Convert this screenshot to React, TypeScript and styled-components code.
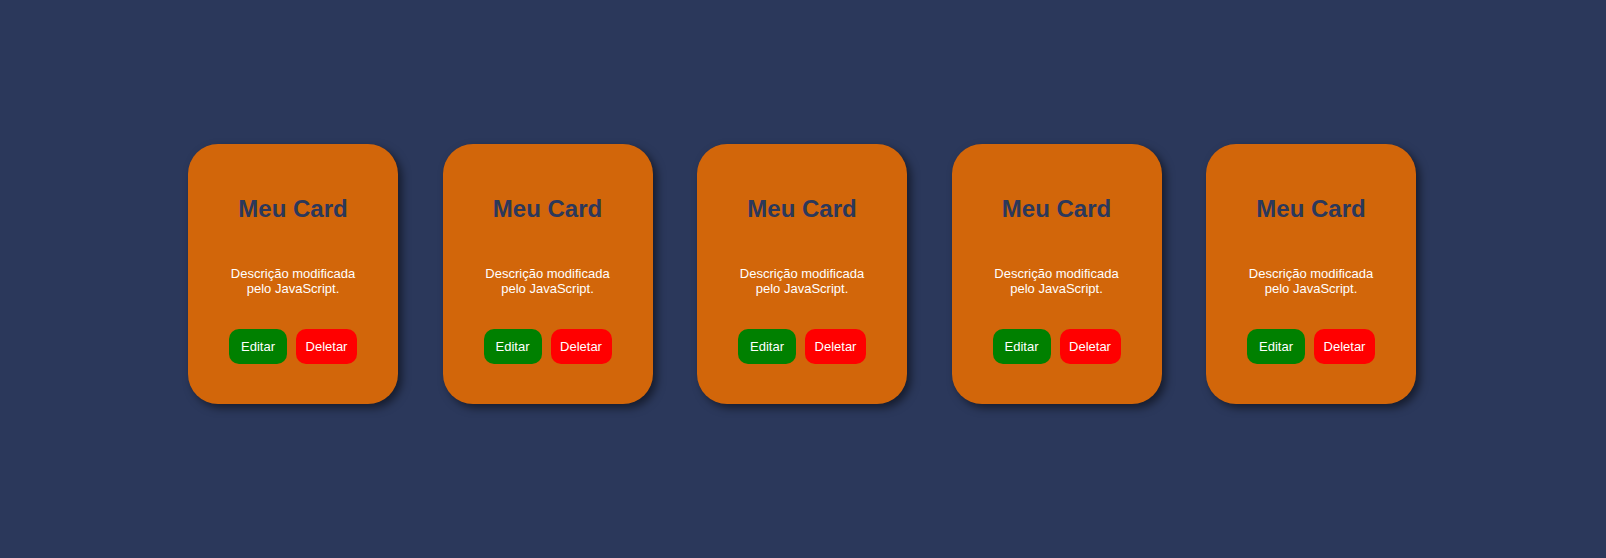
import React from "react";
import styled, { createGlobalStyle } from "styled-components";

const GlobalStyle = createGlobalStyle`
  html, body {
    margin: 0;
    padding: 0;
    background: #2b385b;
    font-family: "Liberation Sans", Arial, sans-serif;
  }
  * { box-sizing: border-box; }
`;

const Page = styled.main`
  width: 1604px;
  height: 558px;
  display: flex;
  justify-content: center;
  align-items: flex-start;
  gap: 44.5px;
  padding-top: 144px;
`;

const Card = styled.section`
  width: 210px;
  height: 260px;
  background: #d2660a;
  border-radius: 30px;
  box-shadow: 4px 4px 8px rgba(0, 0, 0, 0.5);
  display: flex;
  flex-direction: column;
  align-items: center;
  padding: 51px 20px 0;
`;

const Title = styled.h2`
  margin: 0 0 43px;
  font-size: 24px;
  line-height: 27.6px;
  font-weight: bold;
  color: #2b385b;
  text-align: center;
`;

const Description = styled.p`
  margin: 0 0 33.5px;
  max-width: 140px;
  font-size: 13px;
  line-height: 15px;
  color: #ffffff;
  text-align: center;
`;

const Actions = styled.div`
  display: flex;
  gap: 9px;
`;

const Button = styled.button<{ $bg: string; $w: number }>`
  width: ${(p) => p.$w}px;
  height: 35px;
  border: none;
  border-radius: 10px;
  background: ${(p) => p.$bg};
  color: #ffffff;
  font-family: "Liberation Sans", Arial, sans-serif;
  font-size: 13px;
  line-height: 15px;
  padding: 0;
  cursor: pointer;
`;

export default function App() {
  return (
    <>
      <GlobalStyle />
      <Page>
        {[0, 1, 2, 3, 4].map((i) => (
          <Card key={i}>
            <Title>Meu Card</Title>
            <Description>Descrição modificada pelo JavaScript.</Description>
            <Actions>
              <Button $bg="#008000" $w={58}>Editar</Button>
              <Button $bg="#ff0000" $w={61}>Deletar</Button>
            </Actions>
          </Card>
        ))}
      </Page>
    </>
  );
}
